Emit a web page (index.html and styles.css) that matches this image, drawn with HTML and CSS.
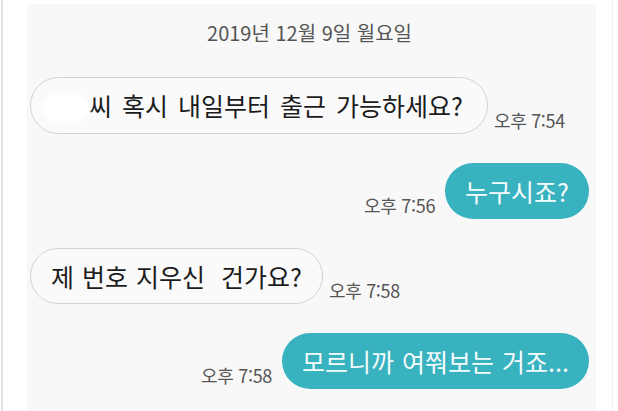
FILE: index.html
```html
<!DOCTYPE html>
<html lang="ko">
<head>
    <meta charset="UTF-8">
    <meta name="viewport" content="width=device-width, initial-scale=1.0">
    <title>메시지</title>
    <link rel="stylesheet" href="styles.css">
</head>
<body>
    <div class="screen">
        <div class="chat">
            <div class="date">2019년 12월 9일 월요일</div>

            <div class="row in">
                <div class="bubble first"><span class="hidden-name"></span>씨 혹시 내일부터 출근 가능하세요?</div>
                <span class="time">오후 7:54</span>
            </div>

            <div class="row out">
                <span class="time">오후 7:56</span>
                <div class="bubble">누구시죠?</div>
            </div>

            <div class="row in">
                <div class="bubble keep-spaces">제 번호 지우신  건가요?</div>
                <span class="time">오후 7:58</span>
            </div>

            <div class="row out">
                <span class="time">오후 7:58</span>
                <div class="bubble">모르니까 여쭤보는 거죠...</div>
            </div>
        </div>
    </div>
</body>
</html>
```

FILE: styles.css
```css
body {
    margin: 0;
    background-color: #fff;
    font-family: "Noto Sans CJK KR", "Noto Sans", sans-serif;
    color: #1c1c1c;
}
.screen {
    display: flex;
    width: 569px;
    height: 411px;
    margin-left: 1px;
    padding: 0 16px 0 24px;
    border-left: 2px solid #e2e2e2;
    border-right: 1px solid #f2f2f2;
    overflow: hidden;
}
.chat {
    flex: 1;
    display: flex;
    flex-direction: column;
    margin-top: 4px;
    padding: 0 7px 0 3px;
    background-color: #f8f8f8;
}
.date {
    margin: 16px 0 31px;
    font-size: 20px;
    line-height: 26px;
    text-align: center;
    color: #555;
}
.row {
    display: flex;
    align-items: flex-end;
    gap: 6px;
    margin-bottom: 29px;
}
.row.out {
    justify-content: flex-end;
    gap: 10px;
}
.bubble {
    padding: 13px 20px;
    border-radius: 30px;
    font-size: 25px;
    line-height: 30px;
    word-spacing: 1px;
    white-space: nowrap;
}
.row.in .bubble {
    background-color: #fafafa;
    border: 1.5px solid #d2d2d2;
    padding: 12px 20px;
}
.row.in .bubble.first {
    padding-right: 24px;
    word-spacing: 3px;
}
.row.out .bubble {
    background-color: #38b2bf;
    color: #f4fbfc;
}
.keep-spaces {
    white-space: pre;
}
.hidden-name {
    display: inline-block;
    width: 48px;
    height: 26px;
    margin-left: -10px;
    vertical-align: -5px;
    border-radius: 13px;
    background-color: #fff;
    filter: blur(3px);
}
.time {
    margin-bottom: 3px;
    font-size: 18px;
    line-height: 22px;
    color: #555;
    white-space: nowrap;
    letter-spacing: -0.3px;
}
```
